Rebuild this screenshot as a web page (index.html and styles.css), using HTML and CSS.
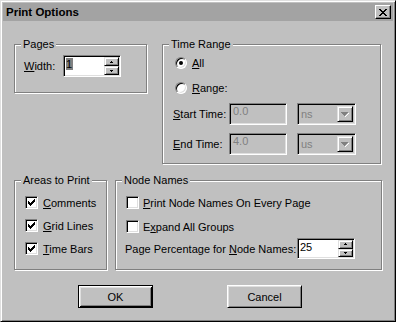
FILE: index.html
```html
<!DOCTYPE html>
<html lang="en">
<head>
    <meta charset="UTF-8">
    <title>Print Options</title>
    <link rel="stylesheet" href="styles.css">
</head>
<body>
    <div class="window">
        <div class="titlebar">
            <span class="title">Print Options</span>
            <span class="close">
                <svg width="8" height="7" viewBox="0 0 8 7"><path d="M0 0h2v1h-2z M6 0h2v1h-2z M1 1h2v1h-2z M5 1h2v1h-2z M2 2h4v1h-4z M3 3h2v1h-2z M2 4h4v1h-4z M1 5h2v1h-2z M5 5h2v1h-2z M0 6h2v1h-2z M6 6h2v1h-2z"/></svg>
            </span>
        </div>

        <div class="content">
            <div class="row row-top">
                <div class="group pages">
                    <span class="group-title">Pages</span>
                    <div class="field">
                        <label class="label width-label"><u>W</u>idth:</label>
                        <div class="spin">
                            <span class="spin-text"><span class="sel">1</span></span>
                            <span class="spin-btns">
                                <span class="spin-btn"><svg width="3" height="2" viewBox="0 0 3 2"><path d="M1 0h1v1h1v1h-3v-1h1z"/></svg></span>
                                <span class="spin-btn"><svg width="3" height="2" viewBox="0 0 3 2"><path d="M0 0h3v1h-1v1h-1v-1h-1z"/></svg></span>
                            </span>
                        </div>
                    </div>
                </div>

                <div class="group time-range">
                    <span class="group-title">Time Range</span>
                    <div class="option option-all">
                        <span class="radio checked"></span>
                        <span><u>A</u>ll</span>
                    </div>
                    <div class="option option-range">
                        <span class="radio"></span>
                        <span><u>R</u>ange:</span>
                    </div>
                    <div class="field time-field start-field">
                        <label class="label time-label"><u>S</u>tart Time:</label>
                        <span class="edit disabled">0.0</span>
                        <span class="combo disabled">
                            <span class="combo-text">ns</span>
                            <span class="combo-btn"><svg width="8" height="5" viewBox="0 0 8 5"><path class="hl" d="M1 1h7v1h-1v1h-1v1h-1v1h-1v-1h1v-1h1v-1h1v-1z"/><path d="M0 0h7v1h-1v1h-1v1h-1v1h-1v-1h-1v-1h-1v-1h-1z"/></svg></span>
                        </span>
                    </div>
                    <div class="field time-field end-field">
                        <label class="label time-label"><u>E</u>nd Time:</label>
                        <span class="edit disabled">4.0</span>
                        <span class="combo disabled">
                            <span class="combo-text">us</span>
                            <span class="combo-btn"><svg width="8" height="5" viewBox="0 0 8 5"><path class="hl" d="M1 1h7v1h-1v1h-1v1h-1v1h-1v-1h1v-1h1v-1h1v-1z"/><path d="M0 0h7v1h-1v1h-1v1h-1v1h-1v-1h-1v-1h-1v-1h-1z"/></svg></span>
                        </span>
                    </div>
                </div>
            </div>

            <div class="row row-bottom">
                <div class="group areas">
                    <span class="group-title">Areas to Print</span>
                    <div class="checks">
                        <div class="check-row">
                            <span class="checkbox"><svg width="7" height="7" viewBox="0 0 7 7"><path d="M0 2H1V3H2V4H3V3H4V2H5V1H6V0H7V3H6V4H5V5H4V6H3V7H2V6H1V5H0Z"/></svg></span>
                            <span><u>C</u>omments</span>
                        </div>
                        <div class="check-row">
                            <span class="checkbox"><svg width="7" height="7" viewBox="0 0 7 7"><path d="M0 2H1V3H2V4H3V3H4V2H5V1H6V0H7V3H6V4H5V5H4V6H3V7H2V6H1V5H0Z"/></svg></span>
                            <span><u>G</u>rid Lines</span>
                        </div>
                        <div class="check-row">
                            <span class="checkbox"><svg width="7" height="7" viewBox="0 0 7 7"><path d="M0 2H1V3H2V4H3V3H4V2H5V1H6V0H7V3H6V4H5V5H4V6H3V7H2V6H1V5H0Z"/></svg></span>
                            <span><u>T</u>ime Bars</span>
                        </div>
                    </div>
                </div>

                <div class="group node-names">
                    <span class="group-title">Node Names</span>
                    <div class="checks">
                        <div class="check-row">
                            <span class="checkbox"></span>
                            <span><u>P</u>rint Node Names On Every Page</span>
                        </div>
                        <div class="check-row">
                            <span class="checkbox"></span>
                            <span>E<u>x</u>pand All Groups</span>
                        </div>
                    </div>
                    <div class="field percent-field">
                        <label class="label percent-label">Page Percentage for <u>N</u>ode Names:</label>
                        <div class="spin percent-spin">
                            <span class="spin-text">25</span>
                            <span class="spin-btns">
                                <span class="spin-btn"><svg width="3" height="2" viewBox="0 0 3 2"><path d="M1 0h1v1h1v1h-3v-1h1z"/></svg></span>
                                <span class="spin-btn"><svg width="3" height="2" viewBox="0 0 3 2"><path d="M0 0h3v1h-1v1h-1v-1h-1z"/></svg></span>
                            </span>
                        </div>
                    </div>
                </div>
            </div>

            <div class="buttons">
                <button class="btn btn-default">OK</button>
                <button class="btn">Cancel</button>
            </div>
        </div>
    </div>
</body>
</html>
```

FILE: styles.css
```css
body {
    margin: 0;
    padding: 0;
    font-family: "Liberation Sans", Arial, sans-serif;
    font-size: 11px;
    color: #000;
    background: #c0c0c0;
}
.window {
    width: 396px;
    height: 322px;
    box-sizing: border-box;
    border: 1px solid;
    border-color: #dfdfdf #000 #000 #dfdfdf;
    box-shadow: inset 1px 1px 0 #fff, inset -1px -1px 0 #808080;
    padding: 2px;
    background: #c0c0c0;
}
.titlebar {
    height: 18px;
    display: flex;
    align-items: center;
    justify-content: space-between;
    padding: 0 2px 0 3px;
    background: #a3a3a3;
}
.title {
    font-weight: bold;
    font-size: 11.5px;
}
.close {
    width: 16px;
    height: 14px;
    box-sizing: border-box;
    display: flex;
    align-items: center;
    justify-content: center;
    background: #c0c0c0;
    border: 1px solid;
    border-color: #fff #000 #000 #fff;
    box-shadow: inset -1px -1px 0 #808080;
}
.close svg {
    display: block;
    margin-right: 1px;
}

.content {
    padding: 23px 0 0 11px;
}
.row {
    display: flex;
    align-items: flex-start;
}
.row-bottom {
    margin-top: 16px;
}

/* etched group box */
.group {
    position: relative;
    box-sizing: border-box;
    border: 1px solid #808080;
    box-shadow: 1px 1px 0 #fff, inset 1px 1px 0 #fff;
}
.group-title {
    position: absolute;
    top: -7px;
    left: 6px;
    padding: 0 2px;
    line-height: 13px;
    background: #c0c0c0;
}
.pages {
    width: 133px;
    height: 49px;
    margin-right: 15px;
    padding: 10px 0 0 9px;
}
.time-range {
    width: 219px;
    height: 120px;
    padding: 10px 0 0 10px;
}
.areas {
    width: 93px;
    height: 90px;
    margin-right: 8px;
    padding: 15px 0 0 10px;
}
.node-names {
    width: 267px;
    height: 90px;
    padding: 15px 0 0 10px;
}

.field {
    display: flex;
    align-items: center;
}
.label {
    white-space: nowrap;
}
.width-label {
    width: 39px;
}
.time-label {
    width: 56px;
}
.percent-label {
    width: 172px;
    margin-left: -1px;
}

/* sunken edit */
.spin, .edit, .combo {
    box-sizing: border-box;
    height: 22px;
    border: 1px solid;
    border-color: #808080 #fff #fff #808080;
    box-shadow: inset 1px 1px 0 #000, inset -1px -1px 0 #dfdfdf;
    background: #fff;
}
.spin {
    width: 58px;
    display: flex;
    padding: 1px;
}
.spin-text {
    flex: 1;
    padding: 1px 0 0 1px;
    line-height: 13px;
}
.sel {
    background: #808080;
    padding-right: 1px;
}
.spin-btns {
    width: 15px;
    display: flex;
    flex-direction: column;
}
.spin-btn {
    flex: 1;
    display: flex;
    align-items: center;
    justify-content: center;
    box-sizing: border-box;
    background: #c0c0c0;
    border: 1px solid;
    border-color: #dfdfdf #000 #000 #dfdfdf;
    box-shadow: inset 1px 1px 0 #fff, inset -1px -1px 0 #808080;
}
.spin-btn svg {
    display: block;
}
.percent-spin {
    height: 21px;
}

.option {
    display: flex;
    align-items: center;
    height: 16px;
    margin-left: 2px;
    gap: 5px;
}
.option-range {
    margin-top: 9px;
}
.radio {
    width: 12px;
    height: 12px;
    box-sizing: border-box;
    border-radius: 50%;
    border: 1px solid;
    border-color: #808080 #fff #fff #808080;
    box-shadow: inset 1px 1px 0 #000, inset -1px -1px 0 #dfdfdf;
    background: #fff;
    display: flex;
    align-items: center;
    justify-content: center;
}
.radio.checked::after {
    content: "";
    width: 4px;
    height: 4px;
    border-radius: 50%;
    background: #000;
}

.time-field {
    margin-top: 7px;
}
.end-field {
    margin-top: 8px;
}
.edit {
    width: 58px;
    margin-right: 10px;
    padding: 1px 0 0 3px;
    line-height: 13px;
}
.combo {
    width: 59px;
    display: flex;
    padding: 2px;
}
.disabled {
    background: #c0c0c0;
    color: #808080;
}
.combo-text {
    flex: 1;
    padding: 2px 0 0 1px;
    line-height: 13px;
}
.combo-btn {
    width: 16px;
    display: flex;
    align-items: center;
    justify-content: center;
    box-sizing: border-box;
    border: 1px solid;
    border-color: #dfdfdf #000 #000 #dfdfdf;
    box-shadow: inset 1px 1px 0 #fff, inset -1px -1px 0 #808080;
}
.combo-btn svg {
    display: block;
    fill: #808080;
}
.combo-btn .hl {
    fill: #fff;
}

.checks {
    display: flex;
    flex-direction: column;
    gap: 10px;
}
.node-names .checks {
    gap: 11px;
}
.check-row {
    display: flex;
    align-items: center;
    height: 13px;
    gap: 5px;
}
.node-names .check-row {
    gap: 4px;
}
.checkbox {
    width: 13px;
    height: 13px;
    box-sizing: border-box;
    border: 1px solid;
    border-color: #808080 #fff #fff #808080;
    box-shadow: inset 1px 1px 0 #000, inset -1px -1px 0 #dfdfdf;
    background: #fff;
    display: flex;
    align-items: center;
    justify-content: center;
}
.checkbox svg {
    display: block;
}
.percent-field {
    margin-top: 5px;
}

.buttons {
    display: flex;
    gap: 74px;
    margin-top: 15px;
    padding-left: 64px;
}
.btn {
    width: 75px;
    height: 23px;
    box-sizing: border-box;
    font-family: "Liberation Sans", Arial, sans-serif;
    font-size: 11px;
    color: #000;
    background: #c0c0c0;
    border: 1px solid;
    border-color: #fff #000 #000 #fff;
    box-shadow: inset 1px 1px 0 #dfdfdf, inset -1px -1px 0 #808080;
    padding: 0;
}
.btn-default {
    border: 1px solid #000;
    box-shadow: inset 1px 1px 0 #fff, inset -1px -1px 0 #000, inset 2px 2px 0 #dfdfdf, inset -2px -2px 0 #808080;
}
```
